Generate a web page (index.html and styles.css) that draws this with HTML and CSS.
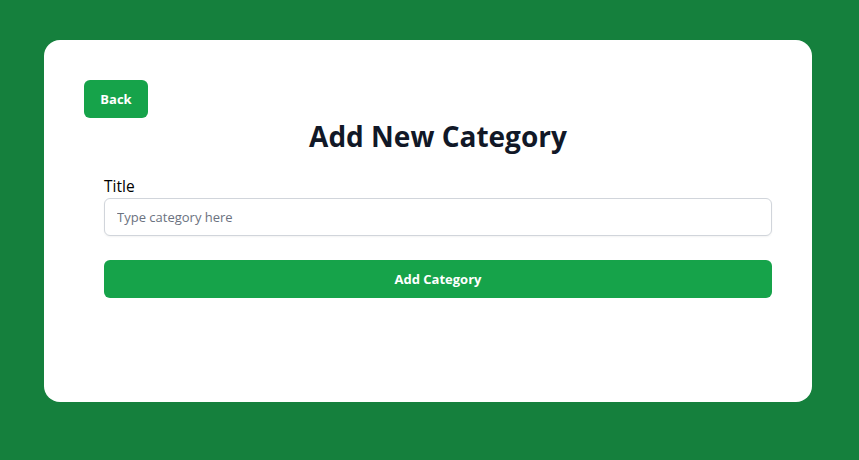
FILE: index.html
```html
<!DOCTYPE html>
<html lang="en">
<head>
<meta charset="utf-8">
<title>Add New Category</title>
<link rel="stylesheet" href="styles.css">
</head>
<body>
  <main class="card">
    <button class="btn back-btn" type="button">Back</button>
    <section class="content">
      <h1 class="heading">Add New Category</h1>
      <form class="form">
        <label class="label" for="title">Title</label>
        <input class="input" id="title" type="text" placeholder="Type category here">
        <button class="btn submit-btn" type="button">Add Category</button>
      </form>
    </section>
  </main>
</body>
</html>
```

FILE: styles.css
```css
* { box-sizing: border-box; }
html, body { margin: 0; }
body {
  background: #15803d;
  font-family: "Open Sans", "Noto Sans", sans-serif;
  width: 859px;
  height: 460px;
  padding: 40px 47px 0 44px;
}
.card {
  background: #ffffff;
  border-radius: 16px;
  width: 768px;
  height: 362px;
  padding: 40px;
  display: flex;
  flex-direction: column;
}
.btn {
  font-family: inherit;
  border: none;
  background: #16a34a;
  color: #ffffff;
  font-weight: 700;
  font-size: 13px;
  border-radius: 6px;
  height: 38px;
  cursor: pointer;
}
.back-btn {
  align-self: flex-start;
  width: 64px;
}
.content {
  margin-left: 20px;
  display: flex;
  flex-direction: column;
}
.heading {
  margin: 0;
  text-align: center;
  font-size: 28px;
  line-height: 36px;
  font-weight: 700;
  color: #111827;
}
.form {
  margin-top: 20px;
  display: flex;
  flex-direction: column;
}
.label {
  font-size: 15.5px;
  font-weight: 500;
  line-height: 24px;
  color: #000;
}
.input {
  font-family: inherit;
  height: 38px;
  border: 1px solid #d1d5db;
  border-radius: 6px;
  padding: 0 12px;
  font-size: 13px;
  color: #111827;
  box-shadow: 0 1px 2px rgba(0,0,0,0.05);
}
.input::placeholder { color: #6b7280; }
.submit-btn {
  margin-top: 24px;
  width: 100%;
}
```
